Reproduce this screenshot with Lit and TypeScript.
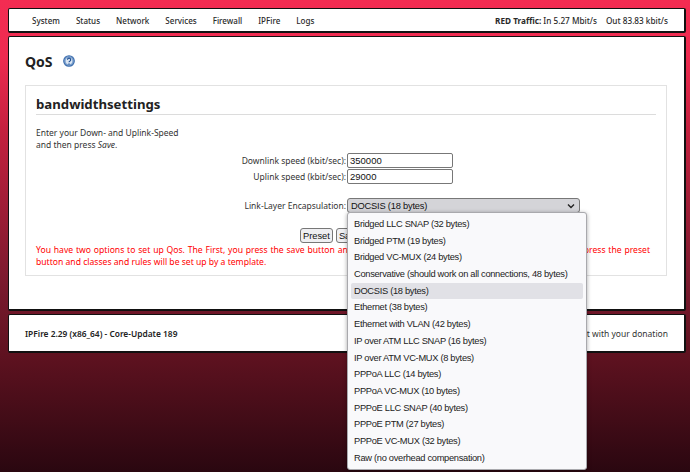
import { LitElement, html, css } from "lit";
import { customElement } from "lit/decorators.js";

const OPTIONS = [
  "Bridged LLC SNAP (32 bytes)",
  "Bridged PTM (19 bytes)",
  "Bridged VC-MUX (24 bytes)",
  "Conservative (should work on all connections, 48 bytes)",
  "DOCSIS (18 bytes)",
  "Ethernet (38 bytes)",
  "Ethernet with VLAN (42 bytes)",
  "IP over ATM LLC SNAP (16 bytes)",
  "IP over ATM VC-MUX (8 bytes)",
  "PPPoA LLC (14 bytes)",
  "PPPoA VC-MUX (10 bytes)",
  "PPPoE LLC SNAP (40 bytes)",
  "PPPoE PTM (27 bytes)",
  "PPPoE VC-MUX (32 bytes)",
  "Raw (no overhead compensation)",
];
const NAV = ["System", "Status", "Network", "Services", "Firewall", "IPFire", "Logs"];

@customElement("app-root")
export class AppRoot extends LitElement {
  static styles = css`
    :host {
      display: block;
      position: relative;
      width: 690px;
      height: 472px;
      overflow: hidden;
      box-sizing: border-box;
      padding: 8px 4px 0 8px;
      background: linear-gradient(180deg, #f32c52 0%, #ee2b50 12%, #c4213f 27.5%, #7a1a2e 60%, #5f1220 75%, #2a0710 100%);
      font-family: "Noto Sans", "Open Sans", sans-serif;
      font-size: 8.5px;
      color: #222;
    }
    .card {
      background: #fff;
      border: 1px solid #111;
      border-right-width: 2px;
      border-bottom-width: 2px;
      border-radius: 2px;
      box-sizing: border-box;
    }
    .nav {
      height: 25px;
      display: flex;
      align-items: center;
      justify-content: space-between;
      padding: 0 16px 0 23px;
      font-weight: 500;
      color: #2a2a2a;
    }
    .nav ul { display: flex; gap: 16px; margin: 0; padding: 0; list-style: none; font-size: 8.05px; }
    .nav b { font-weight: 700; }
    .traffic { display: flex; gap: 9px; font-size: 8.2px; }
    .main {
      margin-top: 3px;
      height: 275px;
      padding: 10px 17px 0 16px;
    }
    .title { display: flex; align-items: center; gap: 10px; height: 26px; margin-top: 1px; }
    h1 { margin: 0; font-size: 14px; font-weight: 700; color: #222; }
    .title svg { display: block; }
    .box {
      margin-top: 11px;
      height: 191px;
      border: 1px solid #e2e2e2;
      box-sizing: border-box;
      padding: 9px 10px 0 10px;
    }
    h2 {
      margin: 0;
      font-size: 13.2px;
      font-weight: 700;
      line-height: 19px;
      border-bottom: 1px solid #dcdcdc;
      height: 20px;
      box-sizing: border-box;
      color: #222;
    }
    .intro { margin: 12px 0 0; line-height: 12px; color: #333; }
    .rows {
      display: grid;
      grid-template-columns: 311px auto;
      justify-content: start;
      align-items: center;
      row-gap: 1px;
      margin-top: 2px;
    }
    .lbl { text-align: right; color: #333; padding-right: 1px; white-space: nowrap; }
    .input {
      width: 106px;
      height: 15px;
      box-sizing: border-box;
      border: 1px solid #777;
      border-radius: 2px;
      background: #fff;
      font: 9.5px "Liberation Sans", sans-serif;
      color: #111;
      padding: 0 2px;
      line-height: 13px;
    }
    .spacer { grid-column: 1 / 3; height: 12px; }
    .select {
      width: 233px;
      height: 15px;
      box-sizing: border-box;
      border: 1px solid #777;
      border-radius: 3px;
      background: #d4d4d8;
      font: 9.3px "Liberation Sans", sans-serif;
      letter-spacing: -0.2px;
      color: #111;
      padding: 0 4px 0 3px;
      display: flex;
      align-items: center;
      justify-content: space-between;
    }
    .buttons { display: flex; gap: 3px; margin: 15px 0 0 264px; }
    .btn {
      height: 15px;
      box-sizing: border-box;
      border: 1px solid #777;
      border-radius: 3px;
      background: #efeff2;
      font: 9.3px "Liberation Sans", sans-serif;
      color: #111;
      padding: 0 2px;
      display: flex;
      align-items: center;
    }
    .red { margin: 1px 0 0; color: #f00; line-height: 12px; font-size: 8.6px; white-space: nowrap; }
    .red .first { word-spacing: 0.6px; }
    .footer {
      margin-top: 3px;
      height: 39px;
      display: flex;
      align-items: center;
      justify-content: space-between;
      padding: 0 16px;
    }
    .footer b { font-weight: 600; color: #222; font-size: 8.4px; }
    .footer span { color: #333; }
    .menu {
      position: absolute;
      left: 347px;
      top: 212px;
      width: 240px;
      height: 258px;
      box-sizing: border-box;
      padding: 3px;
      background: #f9f9fb;
      border: 1px solid #a9a9ad;
      border-radius: 3px;
      box-shadow: 0 1px 4px rgba(0, 0, 0, 0.35);
      font: 9.3px "Liberation Sans", sans-serif;
      letter-spacing: -0.3px;
      color: #222;
    }
    .opt {
      height: 16.7px;
      line-height: 16.7px;
      padding-left: 3px;
      white-space: nowrap;
      border-radius: 2px;
    }
    .opt.sel { background: #e1e1e6; }
  `;

  render() {
    return html`
      <div class="card nav">
        <ul>${NAV.map((n) => html`<li>${n}</li>`)}</ul>
        <div class="traffic"><span><b>RED Traffic:</b> In 5.27 Mbit/s</span><span>Out 83.83 kbit/s</span></div>
      </div>
      <div class="card main">
        <div class="title">
          <h1>QoS</h1>
          <svg width="12" height="12" viewBox="0 0 12 12" aria-hidden="true">
            <circle cx="6" cy="6" r="5.3" fill="#7fa3cf" stroke="#3f6fae" stroke-width="1.1"></circle>
            <circle cx="6" cy="6" r="3.3" fill="#dbe6f3"></circle>
            <path d="M4.5 4.8a1.6 1.6 0 1 1 2.3 1.4c-.5.3-.8.6-.8 1.1" fill="none" stroke="#1f4f93" stroke-width="1.2"></path>
            <circle cx="6" cy="9" r=".7" fill="#1f4f93"></circle>
          </svg>
        </div>
        <div class="box">
          <h2>bandwidthsettings</h2>
          <p class="intro">Enter your Down- and Uplink-Speed<br />and then press <i>Save</i>.</p>
          <div class="rows">
            <div class="lbl">Downlink speed (kbit/sec):</div>
            <div class="input">350000</div>
            <div class="lbl">Uplink speed (kbit/sec):</div>
            <div class="input">29000</div>
            <div class="spacer"></div>
            <div class="lbl">Link-Layer Encapsulation:</div>
            <div class="select">
              <span>DOCSIS (18 bytes)</span>
              <svg width="8" height="6" viewBox="0 0 8 6" aria-hidden="true"><path d="M1 1.5 4 4.5 7 1.5" fill="none" stroke="#222" stroke-width="1.4"></path></svg>
            </div>
          </div>
          <div class="buttons">
            <div class="btn">Preset</div>
            <div class="btn">Save</div>
          </div>
          <p class="red"><span class="first">You have two options to set up Qos. The First, you press the save button and go through all the steps on your own. The second, you press the preset</span><br />button and classes and rules will be set up by a template.</p>
        </div>
      </div>
      <div class="card footer">
        <b>IPFire 2.29 (x86_64) - Core-Update 189</b>
        <span>Support this project with your donation</span>
      </div>
      <div class="menu">
        ${OPTIONS.map((o, i) => html`<div class="opt ${i === 4 ? "sel" : ""}">${o}</div>`)}
      </div>
    `;
  }
}
